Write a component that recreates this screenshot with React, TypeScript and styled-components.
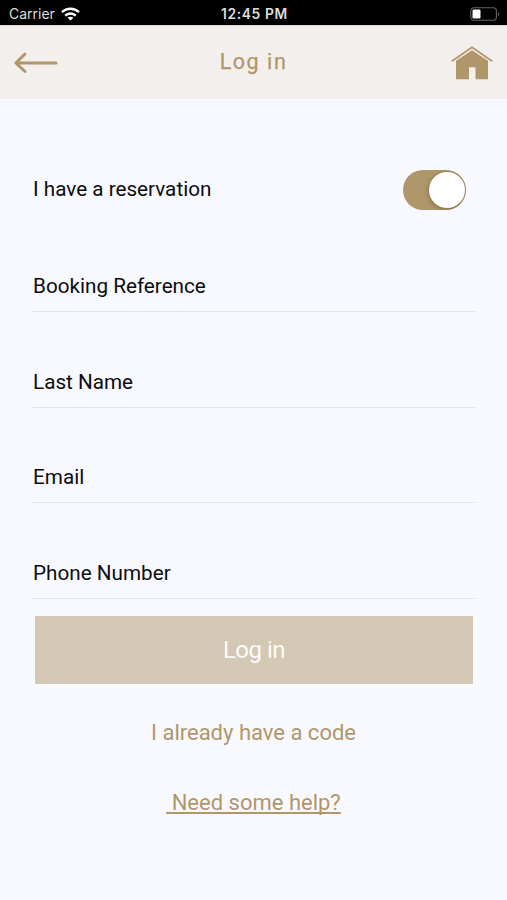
import React, { useState } from "react";
import styled, { createGlobalStyle } from "styled-components";

const gold = "#b0976a";

const GlobalStyle = createGlobalStyle`
  * { box-sizing: border-box; }
  body { margin: 0; background: #f8f9fe; font-family: Roboto, sans-serif; }
  button, input { font: inherit; border: 0; padding: 0; background: none; }
`;

const Screen = styled.main`
  display: flex;
  flex-direction: column;
  width: 507px;
  height: 900px;
  overflow: hidden;
  background: #f8f9fe;
`;

const StatusBar = styled.div`
  display: grid;
  grid-template-columns: 1fr auto 1fr;
  align-items: center;
  height: 25px;
  padding: 2px 7px 0 9px;
  background: #000;
  color: #dedede;
  font: 400 14px/20px Inter, sans-serif;
`;

const Carrier = styled.div`
  display: flex;
  align-items: center;
  gap: 6px;
`;

const Clock = styled.div`
  font-weight: 600;
  font-size: 13.8px;
  letter-spacing: 0.65px;
`;

const BatterySlot = styled.div`
  display: flex;
  justify-content: flex-end;
`;

const Header = styled.header`
  display: grid;
  grid-template-columns: 1fr auto 1fr;
  align-items: center;
  height: 74px;
  padding: 1px 14px 0 13px;
  border-top: 1px solid #dedad3;
  background: #f3efec;
  border-bottom: 1px solid #f0eeee;
`;

const Title = styled.h1`
  margin: 0;
  padding: 0 0 2px 1px;
  color: ${gold};
  font: 400 21.5px/28px Roboto, sans-serif;
  -webkit-text-stroke: 0.25px ${gold};
  letter-spacing: 1.55px;
`;

const IconButton = styled.button<{ $end?: boolean }>`
  display: flex;
  justify-self: ${(p) => (p.$end ? "end" : "start")};
`;

const Form = styled.form`
  display: flex;
  flex-direction: column;
  padding: 71px 31px 0 32px;
`;

const ToggleRow = styled.div`
  display: flex;
  align-items: center;
  justify-content: space-between;
  height: 40px;
  padding: 0 10px 0 1px;
  color: #0c0c10;
  font-size: 20.7px;
  line-height: 26px;
`;

const ToggleLabel = styled.span`
  padding-bottom: 2px;
`;

const Switch = styled.button<{ $on: boolean }>`
  display: flex;
  align-items: center;
  justify-content: ${(p) => (p.$on ? "flex-end" : "flex-start")};
  width: 63px;
  height: 40px;
  padding: 0 1px;
  border-radius: 20px;
  background: ${(p) => (p.$on ? gold : "#d3c8b4")};
  overflow: hidden;
`;

const Knob = styled.span`
  width: 36px;
  height: 36px;
  border-radius: 50%;
  background: #fff;
  box-shadow: 0 1px 5px rgba(70, 50, 15, 0.5);
`;

const Fields = styled.div`
  display: flex;
  flex-direction: column;
  padding-top: 6px;
`;

const Field = styled.label`
  display: flex;
  align-items: flex-end;
  height: 95.6px;
  padding: 0 1px 12px;
  border-bottom: 1.5px solid #e4e5eb;
  color: #0c0c10;
  font-size: 20.7px;
  line-height: 26px;

  &:first-child {
    height: 96px;
  }
`;

const Submit = styled.button`
  height: 68px;
  margin: 17.2px 3px 0;
  background: #d2c8b4;
  color: #fdf9f7;
  font-size: 24px;
  letter-spacing: -0.5px;
`;

const Links = styled.nav`
  display: flex;
  flex-direction: column;
  align-items: center;
  gap: 42px;
  padding-top: 35px;
`;

const TextLink = styled.a<{ $underlined?: boolean }>`
  color: ${gold};
  font-size: 22px;
  line-height: 28px;
  white-space: pre;
  text-decoration: ${(p) => (p.$underlined ? "underline" : "none")};
  text-underline-offset: 2px;
  text-decoration-thickness: 1.5px;
  text-decoration-skip-ink: none;
`;

const labels = ["Booking Reference", "Last Name", "Email", "Phone Number"];

const WifiIcon = () => (
  <svg width="19" height="14" viewBox="0 0 19 14" fill="none" stroke="#fff" strokeWidth="2.5">
    <path d="M1 5.2C5.8.5 13.2.5 18 5.2" />
    <path d="M4.2 8.6c3-2.9 7.6-2.9 10.6 0" />
    <path d="M9.5 13.6 6.6 10.8c1.6-1.5 4.2-1.5 5.8 0Z" fill="#fff" stroke="none" />
  </svg>
);

const BatteryIcon = () => (
  <svg width="30" height="14" viewBox="0 0 30 14" fill="none">
    <rect x="0.8" y="0.8" width="25.6" height="12.4" rx="3.2" stroke="#666668" strokeWidth="1.1" />
    <rect x="2.5" y="2.5" width="8" height="9" rx="1.3" fill="#fff" />
    <path d="M28.1 5v4.2c1.6-.8 1.6-3.4 0-4.2Z" fill="#666668" />
  </svg>
);

const ArrowIcon = () => (
  <svg width="46" height="24" viewBox="0 0 46 24" fill="none" stroke={gold} strokeWidth="3" strokeLinecap="round" strokeLinejoin="round">
    <path d="M43 12H3M12 3 2.8 12l9.2 8.5" />
  </svg>
);

const HomeIcon = () => (
  <svg width="42" height="34" viewBox="0 0 42 34">
    <path d="M.8 15.2 21 1.2l20.2 14" fill="none" stroke={gold} strokeWidth="1.7" />
    <path d="M5 14.8 21 4.2l16 10.6V33.3H24.5V21.2H18V33.3H5Z" fill={gold} />
  </svg>
);

export default function App() {
  const [hasReservation, setHasReservation] = useState(true);
  return (
    <Screen>
      <GlobalStyle />
      <StatusBar>
        <Carrier>Carrier<WifiIcon /></Carrier>
        <Clock>12:45 PM</Clock>
        <BatterySlot><BatteryIcon /></BatterySlot>
      </StatusBar>
      <Header>
        <IconButton aria-label="Back"><ArrowIcon /></IconButton>
        <Title>Log in</Title>
        <IconButton $end aria-label="Home"><HomeIcon /></IconButton>
      </Header>
      <Form onSubmit={(e) => e.preventDefault()}>
        <ToggleRow>
          <ToggleLabel>I have a reservation</ToggleLabel>
          <Switch
            type="button"
            role="switch"
            aria-label="I have a reservation"
            aria-checked={hasReservation}
            $on={hasReservation}
            onClick={() => setHasReservation(!hasReservation)}
          >
            <Knob />
          </Switch>
        </ToggleRow>
        <Fields>
          {labels.map((label) => (
            <Field key={label}>{label}</Field>
          ))}
        </Fields>
        <Submit type="submit">Log in</Submit>
      </Form>
      <Links>
        <TextLink>I already have a code</TextLink>
        <TextLink $underlined>{" Need some help?"}</TextLink>
      </Links>
    </Screen>
  );
}
